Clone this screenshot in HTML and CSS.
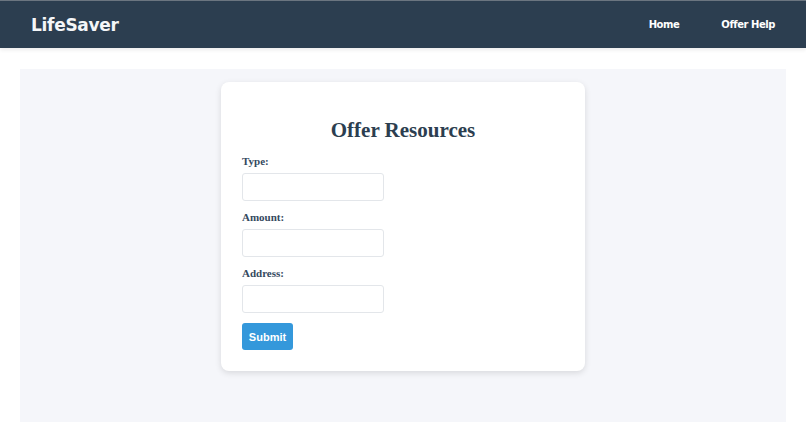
FILE: index.html
```
<!DOCTYPE html>
<html>
<head>
<meta charset="utf-8">
<link rel="stylesheet" href="styles.css">
</head>
<body>
<header class="topbar">
  <div class="brand">LifeSaver</div>
  <nav class="nav">
    <a class="nav-link" href="#">Home</a>
    <a class="nav-link" href="#">Offer Help</a>
  </nav>
</header>
<main class="main">
  <div class="card">
    <h1 class="title">Offer Resources</h1>
    <form class="form">
      <label class="label">Type:</label>
      <input class="input" type="text">
      <label class="label">Amount:</label>
      <input class="input" type="text">
      <label class="label">Address:</label>
      <input class="input" type="text">
      <button class="btn" type="button">Submit</button>
    </form>
  </div>
</main>
</body>
</html>
```
FILE: styles.css
```
html, body {
  margin: 0;
  padding: 0;
  background: #ffffff;
}
body {
  font-family: "Liberation Serif", serif;
  color: #2c3e50;
}
.topbar {
  height: 47px;
  background: #2c3e50;
  border-top: 1px solid #6b7580;
  display: flex;
  align-items: center;
  justify-content: space-between;
  padding: 0 31px;
  box-shadow: 0 2px 4px rgba(0,0,0,0.08);
}
.brand {
  font-family: "DejaVu Sans", sans-serif;
  font-weight: bold;
  font-size: 17px;
  color: #f4f6f8;
  letter-spacing: -0.3px;
}
.nav {
  display: flex;
  gap: 42px;
}
.nav-link {
  font-family: "DejaVu Sans", sans-serif;
  font-weight: bold;
  font-size: 10px;
  color: #ffffff;
  text-decoration: none;
  letter-spacing: -0.45px;
}
.main {
  margin: 21px 20px 0;
  background: #f5f6fa;
  padding: 13px 0 60px;
  display: flex;
  justify-content: center;
}
.card {
  width: 322px;
  background: #ffffff;
  border-radius: 8px;
  padding: 33px 21px 21px;
  box-shadow: 0 2px 6px rgba(0,0,0,0.12);
}
.title {
  margin: 0 0 10px;
  text-align: center;
  font-size: 21px;
  font-weight: bold;
  line-height: 30px;
  color: #2c3e50;
}
.form {
  display: flex;
  flex-direction: column;
  align-items: flex-start;
}
.label {
  font-size: 11px;
  font-weight: bold;
  line-height: 13px;
  margin-bottom: 5px;
  color: #34495e;
}
.input {
  box-sizing: border-box;
  width: 142px;
  height: 28px;
  border: 1px solid #e3e6ea;
  border-radius: 3px;
  margin: 0 0 10px;
  padding: 0 6px;
  background: #fff;
}
.btn {
  margin-top: 0;
  width: 51px;
  height: 27px;
  border: none;
  border-radius: 3px;
  background: #3498db;
  color: #ffffff;
  font-family: "Liberation Sans", sans-serif;
  font-weight: bold;
  font-size: 11px;
  padding: 0;
}
```
